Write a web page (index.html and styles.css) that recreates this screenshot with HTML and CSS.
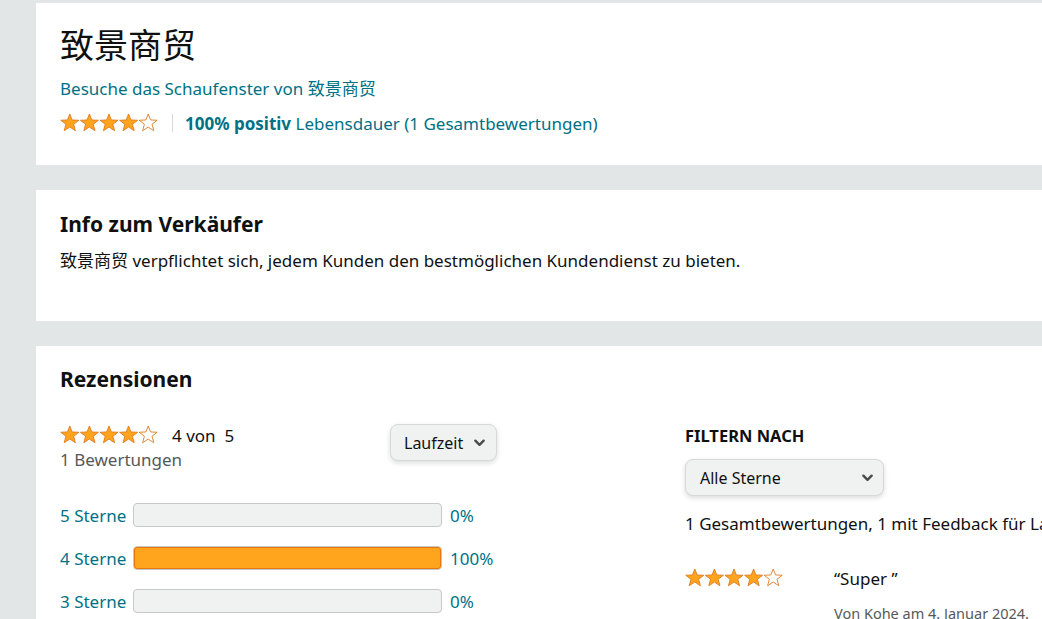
FILE: index.html
```html
<!DOCTYPE html>
<html lang="de">
<head>
<meta charset="utf-8">
<title>致景商贸</title>
<link rel="stylesheet" href="styles.css">
</head>
<body>
<div class="page">
  <section class="card card-head">
    <h1 class="title">致景商贸</h1>
    <a class="link store-link" href="#">Besuche das Schaufenster von 致景商贸</a>
    <div class="rating-line">
      <svg class="stars" viewBox="0 0 100 20" width="98" height="20" aria-hidden="true">
        <g class="star-full"><polygon points="10,0.8 12.4,6.9 19.2,7.2 13.9,11.3 15.7,17.9 10,14.1 4.3,17.9 6.1,11.3 0.8,7.2 7.6,6.9"/></g>
        <g class="star-full" transform="translate(20 0)"><polygon points="10,0.8 12.4,6.9 19.2,7.2 13.9,11.3 15.7,17.9 10,14.1 4.3,17.9 6.1,11.3 0.8,7.2 7.6,6.9"/></g>
        <g class="star-full" transform="translate(40 0)"><polygon points="10,0.8 12.4,6.9 19.2,7.2 13.9,11.3 15.7,17.9 10,14.1 4.3,17.9 6.1,11.3 0.8,7.2 7.6,6.9"/></g>
        <g class="star-full" transform="translate(60 0)"><polygon points="10,0.8 12.4,6.9 19.2,7.2 13.9,11.3 15.7,17.9 10,14.1 4.3,17.9 6.1,11.3 0.8,7.2 7.6,6.9"/></g>
        <g class="star-empty" transform="translate(80 0)"><polygon points="10,0.8 12.4,6.9 19.2,7.2 13.9,11.3 15.7,17.9 10,14.1 4.3,17.9 6.1,11.3 0.8,7.2 7.6,6.9"/></g>
      </svg>
      <span class="divider"></span>
      <a class="link" href="#"><b>100% positiv</b> Lebensdauer (1 Gesamtbewertungen)</a>
    </div>
  </section>

  <section class="card card-info">
    <h2 class="heading">Info zum Verkäufer</h2>
    <p class="info-text">致景商贸 verpflichtet sich, jedem Kunden den bestmöglichen Kundendienst zu bieten.</p>
  </section>

  <section class="card card-reviews">
    <h2 class="heading">Rezensionen</h2>
    <div class="reviews-grid">
      <div class="left-col">
        <div class="summary">
          <div class="summary-text">
            <div class="summary-stars">
              <svg class="stars" viewBox="0 0 100 20" width="98" height="20" aria-hidden="true">
                <g class="star-full"><polygon points="10,0.8 12.4,6.9 19.2,7.2 13.9,11.3 15.7,17.9 10,14.1 4.3,17.9 6.1,11.3 0.8,7.2 7.6,6.9"/></g>
                <g class="star-full" transform="translate(20 0)"><polygon points="10,0.8 12.4,6.9 19.2,7.2 13.9,11.3 15.7,17.9 10,14.1 4.3,17.9 6.1,11.3 0.8,7.2 7.6,6.9"/></g>
                <g class="star-full" transform="translate(40 0)"><polygon points="10,0.8 12.4,6.9 19.2,7.2 13.9,11.3 15.7,17.9 10,14.1 4.3,17.9 6.1,11.3 0.8,7.2 7.6,6.9"/></g>
                <g class="star-full" transform="translate(60 0)"><polygon points="10,0.8 12.4,6.9 19.2,7.2 13.9,11.3 15.7,17.9 10,14.1 4.3,17.9 6.1,11.3 0.8,7.2 7.6,6.9"/></g>
                <g class="star-empty" transform="translate(80 0)"><polygon points="10,0.8 12.4,6.9 19.2,7.2 13.9,11.3 15.7,17.9 10,14.1 4.3,17.9 6.1,11.3 0.8,7.2 7.6,6.9"/></g>
              </svg>
              <span class="score">4 von&nbsp; 5</span>
            </div>
            <div class="count">1 Bewertungen</div>
          </div>
          <button class="dropdown laufzeit" type="button">Laufzeit
            <svg class="chev" viewBox="0 0 12 8" width="11" height="8" aria-hidden="true"><path d="M1.5 1.5 L6 6 L10.5 1.5"/></svg>
          </button>
        </div>
        <div class="bars">
          <div class="bar-row"><a class="link bar-label" href="#">5 Sterne</a><div class="bar"><div class="fill" style="width:0%"></div></div><span class="pct link">0%</span></div>
          <div class="bar-row"><a class="link bar-label" href="#">4 Sterne</a><div class="bar"><div class="fill" style="width:100%"></div></div><span class="pct link">100%</span></div>
          <div class="bar-row"><a class="link bar-label" href="#">3 Sterne</a><div class="bar"><div class="fill" style="width:0%"></div></div><span class="pct link">0%</span></div>
        </div>
      </div>
      <div class="right-col">
        <h3 class="filter-title">FILTERN NACH</h3>
        <button class="dropdown stars-select" type="button"><span>Alle Sterne</span>
          <svg class="chev" viewBox="0 0 12 8" width="11" height="8" aria-hidden="true"><path d="M1.5 1.5 L6 6 L10.5 1.5"/></svg>
        </button>
        <p class="total-line">1 Gesamtbewertungen, 1 mit Feedback für Laufzeit</p>
        <div class="review">
          <svg class="stars" viewBox="0 0 100 20" width="98" height="20" aria-hidden="true">
            <g class="star-full"><polygon points="10,0.8 12.4,6.9 19.2,7.2 13.9,11.3 15.7,17.9 10,14.1 4.3,17.9 6.1,11.3 0.8,7.2 7.6,6.9"/></g>
            <g class="star-full" transform="translate(20 0)"><polygon points="10,0.8 12.4,6.9 19.2,7.2 13.9,11.3 15.7,17.9 10,14.1 4.3,17.9 6.1,11.3 0.8,7.2 7.6,6.9"/></g>
            <g class="star-full" transform="translate(40 0)"><polygon points="10,0.8 12.4,6.9 19.2,7.2 13.9,11.3 15.7,17.9 10,14.1 4.3,17.9 6.1,11.3 0.8,7.2 7.6,6.9"/></g>
            <g class="star-full" transform="translate(60 0)"><polygon points="10,0.8 12.4,6.9 19.2,7.2 13.9,11.3 15.7,17.9 10,14.1 4.3,17.9 6.1,11.3 0.8,7.2 7.6,6.9"/></g>
            <g class="star-empty" transform="translate(80 0)"><polygon points="10,0.8 12.4,6.9 19.2,7.2 13.9,11.3 15.7,17.9 10,14.1 4.3,17.9 6.1,11.3 0.8,7.2 7.6,6.9"/></g>
          </svg>
          <div class="review-body">
            <div class="review-title">“Super ”</div>
            <div class="review-meta">Von Kohe am 4. Januar 2024.</div>
          </div>
        </div>
      </div>
    </div>
  </section>
</div>
</body>
</html>
```

FILE: styles.css
```css
html, body {
  margin: 0;
  padding: 0;
  background: #e3e6e6;
  overflow: hidden;
}
body {
  font-family: "Noto Sans", "Noto Sans CJK SC", sans-serif;
  color: #0f1111;
  font-size: 17px;
  width: 1042px;
  height: 619px;
}
.page {
  padding: 3px 0 0 36px;
  display: flex;
  flex-direction: column;
  gap: 25px;
  width: 1200px;
}
.card {
  background: #fff;
  padding: 0 24px;
  box-sizing: border-box;
}
.card-head {
  height: 162px;
  padding-top: 19px;
}
.title {
  margin: 0;
  font-family: "Noto Sans CJK SC", sans-serif;
  font-weight: 400;
  font-size: 34px;
  line-height: 44px;
}
.link {
  color: #007185;
  text-decoration: none;
}
.store-link {
  display: block;
  margin-top: 11px;
  line-height: 24px;
}
.rating-line {
  display: flex;
  align-items: center;
  margin-top: 10px;
  height: 24px;
}
.stars {
  display: block;
  flex: none;
}
.star-full polygon {
  fill: #ffa41c;
  stroke: #de7921;
  stroke-width: 0.9;
  stroke-linejoin: round;
}
.star-empty polygon {
  fill: #fff;
  stroke: #de7921;
  stroke-width: 0.9;
  stroke-linejoin: round;
}
.divider {
  width: 1px;
  height: 18px;
  background: #d5d9d9;
  margin: 0 12px 0 14px;
}
.card-info {
  height: 131px;
  padding-top: 19px;
}
.heading {
  margin: 0;
  font-size: 21px;
  font-weight: 700;
  line-height: 30px;
}
.info-text {
  margin: 10px 0 0;
  line-height: 24px;
}
.card-reviews {
  height: 400px;
  padding-top: 18px;
}
.reviews-grid {
  display: grid;
  grid-template-columns: 625px 1fr;
  margin-top: 24px;
}
.summary {
  display: flex;
  align-items: flex-start;
  width: 437px;
  justify-content: space-between;
}
.summary-stars {
  display: flex;
  align-items: center;
  gap: 14px;
  height: 24px;
  margin-top: 5px;
}
.count {
  color: #565959;
  line-height: 24px;
  margin-top: 1px;
}
.dropdown {
  display: flex;
  align-items: center;
  background: #f0f2f2;
  border: 1px solid #d5d9d9;
  border-radius: 8px;
  box-shadow: 0 2px 5px rgba(15, 17, 17, 0.15);
  font-family: inherit;
  font-size: 16px;
  color: #0f1111;
  box-sizing: border-box;
  cursor: pointer;
}
.laufzeit {
  height: 37px;
  width: 107px;
  padding: 0 11px 0 13px;
  justify-content: space-between;
  margin-top: 6px;
}
.chev {
  display: block;
}
.chev path {
  fill: none;
  stroke: #4a4a4a;
  stroke-width: 2.6;
  stroke-linecap: round;
  stroke-linejoin: round;
}
.bars {
  margin-top: 31px;
  display: flex;
  flex-direction: column;
  gap: 19px;
}
.bar-row {
  display: flex;
  align-items: center;
  height: 24px;
}
.bar-label {
  width: 73px;
  flex: none;
}
.bar {
  width: 309px;
  height: 24px;
  box-sizing: border-box;
  background: #f0f2f2;
  border: 1px solid #c7c9c9;
  border-radius: 4px;
  overflow: hidden;
  flex: none;
}
.fill {
  height: 100%;
  background: #ffa41c;
  box-shadow: inset 0 0 0 1px #e47911;
  border-radius: 3px;
}
.pct {
  margin-left: 8px;
}
.filter-title {
  margin: 6px 0 0;
  font-size: 16.5px;
  font-weight: 700;
  line-height: 24px;
}
.stars-select {
  margin-top: 11px;
  width: 199px;
  height: 37px;
  padding: 0 10px 0 14px;
  justify-content: space-between;
}
.total-line {
  margin: 16px 0 0;
  white-space: nowrap;
  line-height: 24px;
}
.review {
  display: flex;
  align-items: flex-start;
  margin-top: 30px;
  gap: 51px;
}
.review .stars {
  margin-top: 2px;
}
.review-title {
  font-size: 17px;
  line-height: 26px;
}
.review-meta {
  color: #565959;
  font-size: 14.5px;
  line-height: 20px;
  margin-top: 11px;
}
```
